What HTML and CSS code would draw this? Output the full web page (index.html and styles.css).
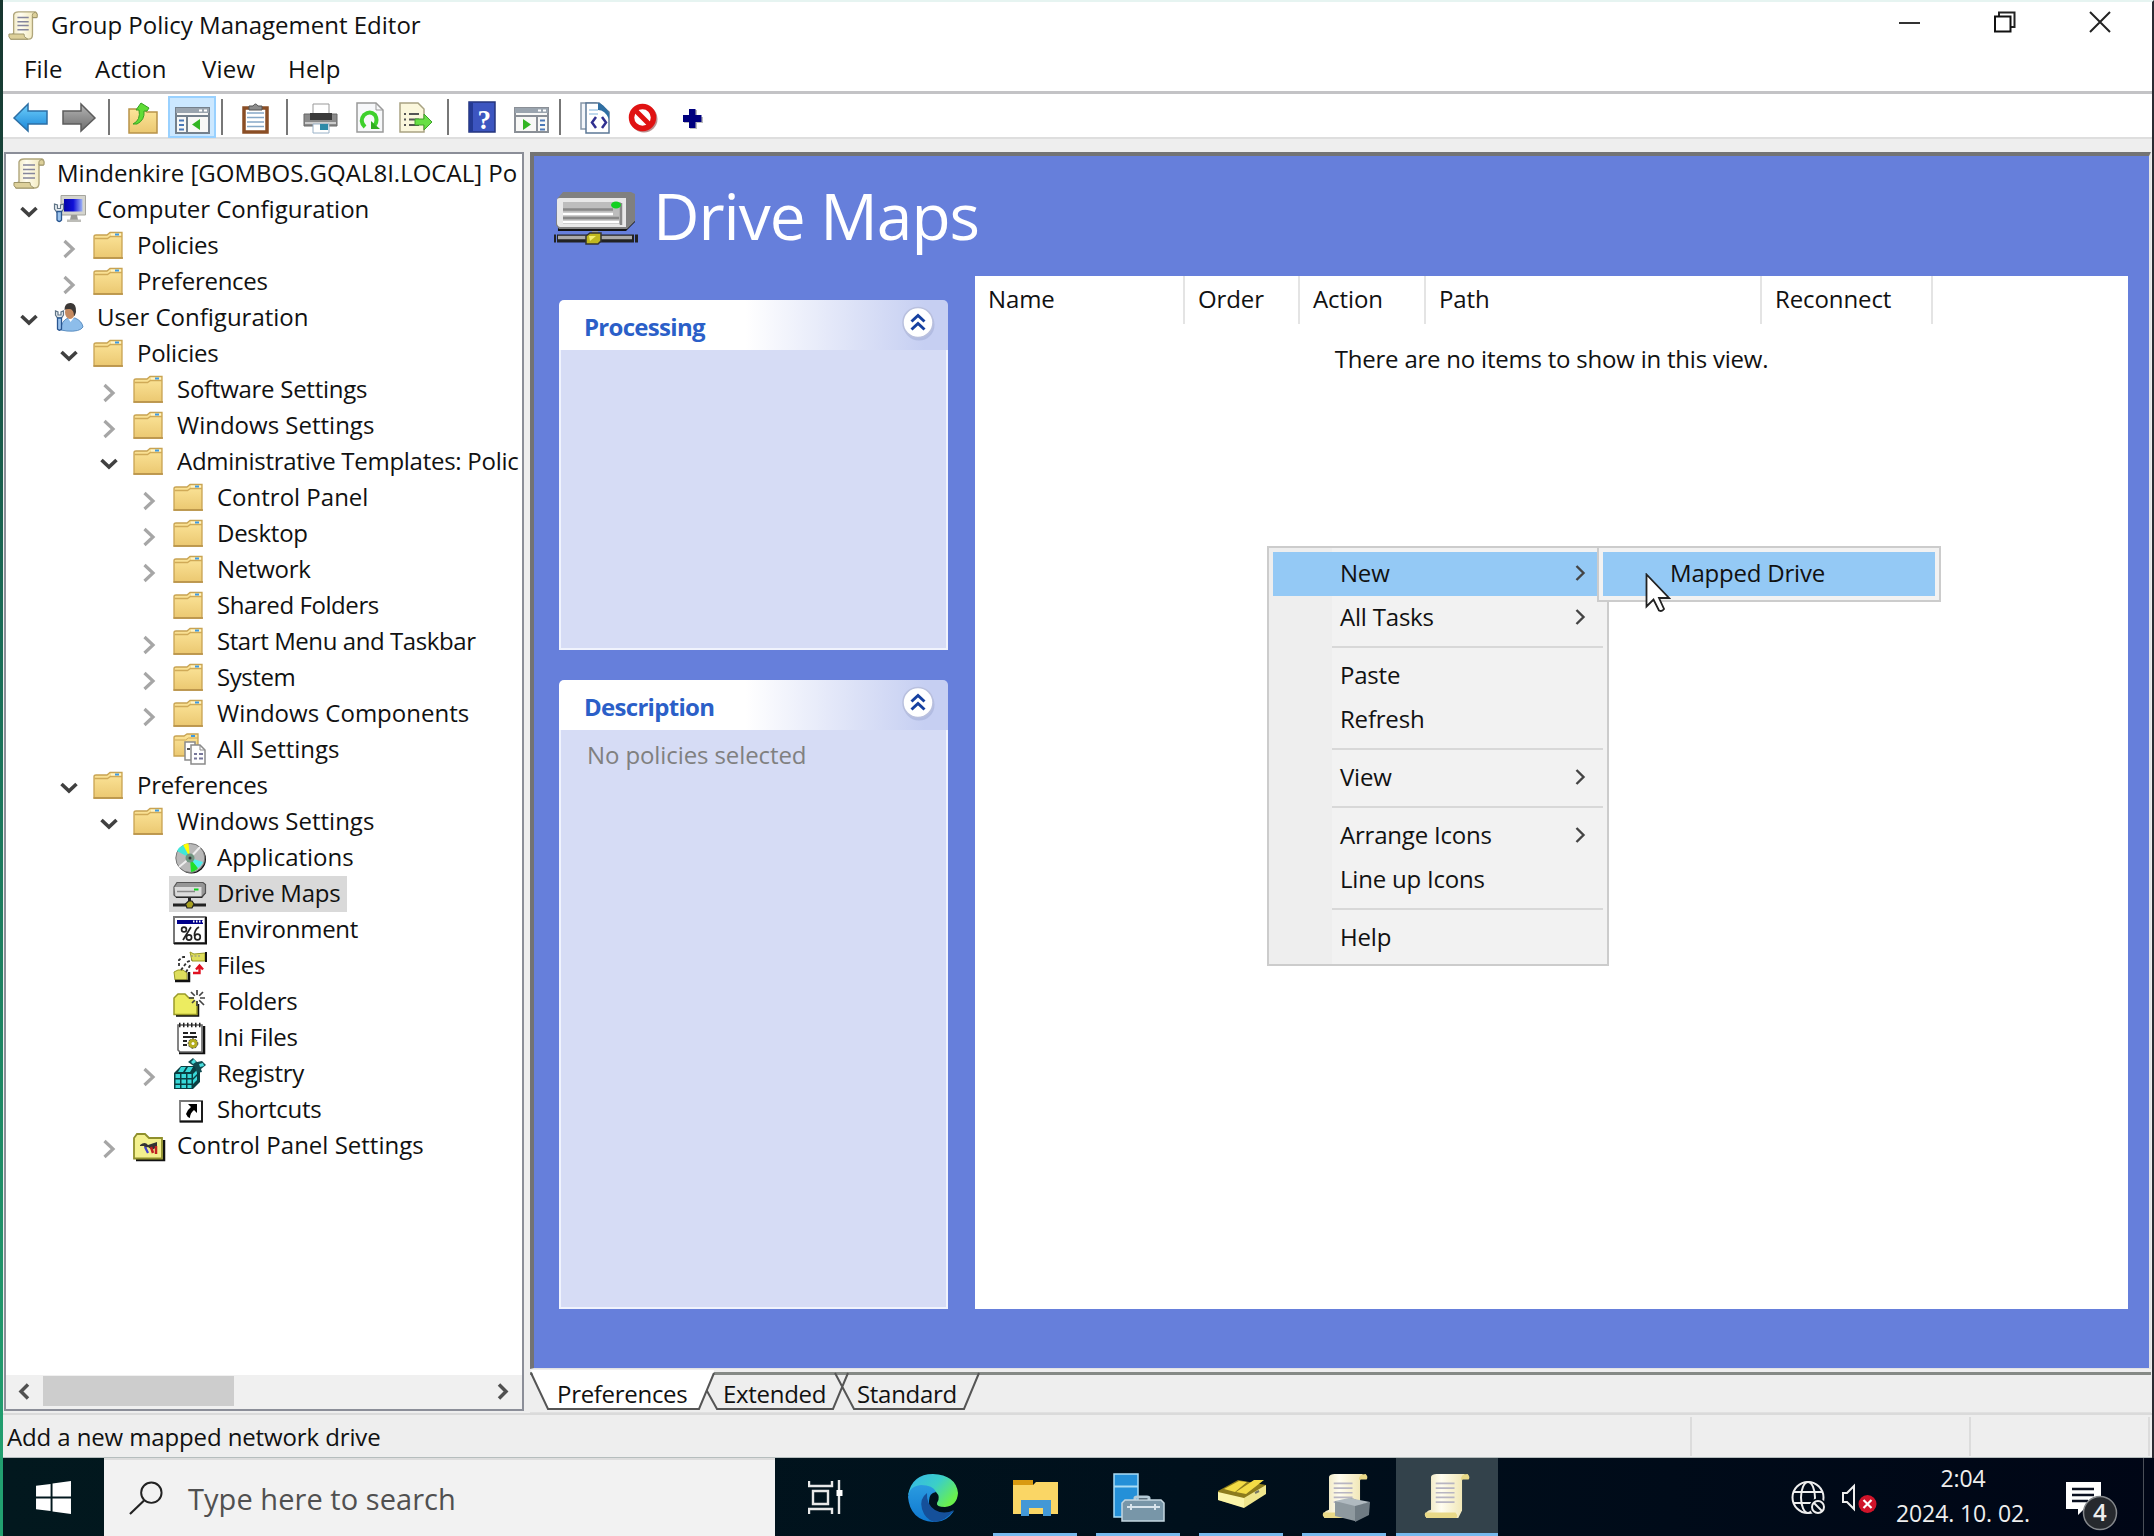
FILE: index.html
```html
<!DOCTYPE html>
<html lang="en">
<head>
<meta charset="utf-8">
<title>Group Policy Management Editor</title>
<link rel="stylesheet" href="styles.css">
</head>
<body>
<svg class="defs" aria-hidden="true">
  <defs>
    <linearGradient id="gFolder" x1="0" y1="0" x2="0" y2="1"><stop offset="0" stop-color="#fce59a"/><stop offset="1" stop-color="#ebc871"/></linearGradient>
    <linearGradient id="gBack" x1="0" y1="0" x2="0" y2="1"><stop offset="0" stop-color="#6fd0fb"/><stop offset="1" stop-color="#1a86d8"/></linearGradient>
    <linearGradient id="gFwd" x1="0" y1="0" x2="0" y2="1"><stop offset="0" stop-color="#b5b5b5"/><stop offset="1" stop-color="#6d6d6d"/></linearGradient>
    <linearGradient id="gScroll" x1="0" y1="0" x2="1" y2="0"><stop offset="0" stop-color="#ece2b4"/><stop offset=".4" stop-color="#fffdf0"/><stop offset="1" stop-color="#efe4b0"/></linearGradient>
    <linearGradient id="gScreen" x1="0" y1="0" x2="1" y2="0"><stop offset="0" stop-color="#0505a8"/><stop offset=".5" stop-color="#1010d8"/><stop offset="1" stop-color="#9fb4f5"/></linearGradient>
    <linearGradient id="gEdge1" x1="0" y1="0" x2="1" y2=".6"><stop offset="0" stop-color="#35b4ea"/><stop offset=".55" stop-color="#3bcfc8"/><stop offset="1" stop-color="#6af04c"/></linearGradient>
    <linearGradient id="gEdge2" x1="0" y1="0" x2="0" y2="1"><stop offset="0" stop-color="#2a9be0"/><stop offset="1" stop-color="#0f78d0"/></linearGradient>
    <symbol id="open" viewBox="0 0 40 36"><path d="M12.500 16l7.500 7 7.500-7" fill="none" stroke="#404040" stroke-width="3.600"/></symbol>
    <symbol id="closed" viewBox="0 0 40 36"><path d="M15.500 13l8.500 8-8.500 8" fill="none" stroke="#a6a6a6" stroke-width="3.200"/></symbol>
    <symbol id="scroll" viewBox="0 0 34 36">
      <path d="M6 6q1-3 5-3h18q3 1 1 6h-4v18q0 5-4 5H3q-3-4 3-6z" fill="url(#gScroll)" stroke="#b0a67c" stroke-width="1.400"/>
      <path d="M26 9q-1-5 3-5.500 3 1 2 5.500zM1 26.500h16q-1 3 4 5.500H3q-3-2-2-5.500z" fill="#ddd09a" stroke="#9d9469" stroke-width="1"/>
      <path d="M10 9h12M10 13.500h12M10 17.500h12M10 22h12" stroke="#85859c" stroke-width="1.700"/>
    </symbol>
    <symbol id="folder" viewBox="0 0 34 36">
      <path d="M1 8.500q0-1.500 2-1.500h11l3-2.500h12v25.500H1z" fill="url(#gFolder)" stroke="#c8a352" stroke-width="1.300"/>
      <path d="M1.500 10.500h13l3-2 h11.500" fill="none" stroke="#d0aa57" stroke-width="1.400"/>
      <path d="M18 6.500h10" stroke="#fff4c8" stroke-width="2"/><path d="M22 6.500h4" stroke="#3f9ae0" stroke-width="2"/>
      <path d="M.5 30h29.500" stroke="#b8934a" stroke-width="1.600"/>
    </symbol>
    <symbol id="computer" viewBox="0 0 34 36">
      <path d="M8 3.500h24.500v19.500H8z" fill="#d4d4ce" stroke="#a5a59e"/><path d="M11 7h18.500v12.500H11z" fill="url(#gScreen)"/>
      <path d="M18 23h6l1 5h-8z" fill="#9a9a96"/><path d="M14 27.500h14v2.500H14z" fill="#bdbdb8"/>
      <path d="M1.500 12v5l2.500 3.500h4l2.500-3.500v-5l-3 1v3.500H4.500V13z" fill="#e6ecf0" stroke="#5f7486" stroke-width="1.200"/><path d="M4 19.500h4.500v8.500q-2.300 3-4.500 0z" fill="#9cc4ee" stroke="#28558f" stroke-width="1.300"/>
    </symbol>
    <symbol id="user" viewBox="0 0 34 36">
      <path d="M8 30q0-9 7-12h7q7 3 8 9-3 5-16 4z" fill="#8dbdea" stroke="#5c8fc2"/>
      <path d="M14.500 17l3 5 4-5z" fill="#fff"/><ellipse cx="17" cy="12" rx="5" ry="7" fill="#c58a60"/><path d="M11.500 10q0-7.500 6.500-7 5.500.5 5 9-1 4-2 4 0-6-4-7-4-.5-5.500 1z" fill="#3c3836"/>
      <path d="M2.500 11v4l2 3h4l2-3v-4L8 12v3H5v-3z" fill="#e6ecf0" stroke="#5f7486" stroke-width="1.200"/><path d="M4.500 18h4v11q-2 2.500-4 0z" fill="#9cc4ee" stroke="#28558f" stroke-width="1.300"/>
    </symbol>
    <symbol id="allset" viewBox="0 0 34 36">
      <path d="M1 5.500q0-1.500 2-1.500h8l3-2h11v22H1z" fill="url(#gFolder)" stroke="#c8a352" stroke-width="1.300"/><path d="M1.500 8h11l3-2h9.500" fill="none" stroke="#d0aa57"/><path d="M18 4h4" stroke="#3f9ae0" stroke-width="2"/>
      <path d="M12 10h10v18H12z" fill="#fff" stroke="#8b8b8b" stroke-width="1.500"/><path d="M14 17h3" stroke="#555" stroke-width="2"/><path d="M18 13h9l5 5v14H18z" fill="#fff" stroke="#8b8b8b" stroke-width="1.500"/><path d="M27 13v5h5" fill="none" stroke="#8b8b8b"/>
      <path d="M21 22h3m2 0h4M21 26.500h3m2 0h4" stroke="#77779a" stroke-width="1.800"/>
    </symbol>
    <symbol id="disc" viewBox="0 0 34 36">
      <circle cx="18.500" cy="19" r="14.500" fill="#111"/><circle cx="17.300" cy="18" r="14.500" fill="#b9b9b9" stroke="#777"/>
      <path d="M17 18L10 5q3-2 5.500-1.500z" fill="#ff0"/><path d="M17 18L4 11q2-4 6-6z" fill="#3fe8d8"/><path d="M17 18l1 14q5-1 7-4z" fill="#1fe02a"/><path d="M17 18l8 10q3-2 5-6z" fill="#4ff0ee"/>
      <path d="M17 18L27 7M17 18L6 27" stroke="#eee" stroke-width="2"/><circle cx="17" cy="18" r="4.500" fill="#6f9580"/><circle cx="17" cy="18" r="1.500" fill="#333"/>
    </symbol>
    <symbol id="drive" viewBox="0 0 34 36">
      <path d="M3 22h26l4-5V8l-3 12H3z" fill="#000"/><path d="M1 11l3-4.500h26l2.500 2v8.500l-4 4H3l-2-2z" fill="#969696" stroke="#555" stroke-width="1.200"/><path d="M1.500 11h27v9H2.500z" fill="#dcdcdc"/><path d="M4 15.500h18" stroke="#888" stroke-width="1.500"/><path d="M21 13.500h4.500" stroke="#10d020" stroke-width="2"/>
      <path d="M16.500 22v6" stroke="#222" stroke-width="3"/><path d="M0 29h33" stroke="#222" stroke-width="3"/><path d="M12.500 28l3-3h3.500l2 3-2 4h-5z" fill="#a8a020" stroke="#222" stroke-width="1.200"/>
    </symbol>
    <symbol id="env" viewBox="0 0 34 36">
      <path d="M1 5h31.500v26H1z" fill="#fff" stroke="#777" stroke-width="2"/><path d="M33 5v26.500H1" fill="none" stroke="#111" stroke-width="2"/><path d="M4 8h26v4H4z" fill="#00008b"/><path d="M20 9.500h10" stroke="#fff" stroke-width="2" stroke-dasharray="1.500 1.500"/>
      <g fill="none" stroke="#222" stroke-width="1.700"><circle cx="11" cy="17.500" r="2.400"/><circle cx="16" cy="25.500" r="2.600"/><path d="M18 15l-8 13M26 15q-5 3-4.500 9"/><circle cx="24.500" cy="25" r="2.800"/></g>
    </symbol>
    <symbol id="files" viewBox="0 0 34 36">
      <path d="M17 4l4 2 11-1v8H19z" fill="#dede5c" stroke="#999926"/><path d="M18 8h10" stroke="#888" stroke-dasharray="2 1.500"/><path d="M33 4v10" stroke="#111" stroke-width="2"/>
      <path d="M1 24l4-2h5l4 3v7H2z" fill="#dede5c" stroke="#999926"/><path d="M2 33h14V24" fill="none" stroke="#111" stroke-width="2.500"/>
      <path d="M6 18V12l4-3h3M8 22l6-8 5-2M13 24l5-8" fill="none" stroke="#333" stroke-width="1.800" stroke-dasharray="3 2"/>
      <path d="M20 25h6.500v-7m-3.500 3.500l3.500-4 3.500 4" fill="none" stroke="#e01020" stroke-width="2.400"/>
    </symbol>
    <symbol id="newfolder" viewBox="0 0 34 36">
      <path d="M3 31.500h22V20" fill="none" stroke="#111" stroke-width="2.500"/><path d="M1 14l4-4h7l4 4h8v16.500H1z" fill="#ecec60" stroke="#9a9a28" stroke-width="1.500"/>
      <path d="M24 6v6m0 5v5M16 14h5m6 0h5M18 8l4 4m4 4l5 5M30 8l-4 4m-4 4l-3 3" stroke="#444" stroke-width="1.700"/><circle cx="24" cy="14" r="3" fill="#fff"/>
    </symbol>
    <symbol id="ini" viewBox="0 0 34 36">
      <path d="M6 33h25V6" fill="none" stroke="#111" stroke-width="2.500"/><path d="M5 5h24v27H7l-2-2z" fill="#fff" stroke="#666" stroke-width="1.600"/><path d="M6 5h24" stroke="#222" stroke-width="4.500" stroke-dasharray="1.500 2.500"/>
      <path d="M10 13h5m2 0h6M10 17h14M10 21h4M10 25h4" stroke="#222" stroke-width="2"/><circle cx="20" cy="23.500" r="4.800" fill="#b5ad20" stroke="#444" stroke-dasharray="2 1.500"/><circle cx="20" cy="23.500" r="1.500" fill="#fff"/>
    </symbol>
    <symbol id="registry" viewBox="0 0 34 36">
      <path d="M1 17l7-7h14l5 3v13l-7 7H1z" fill="#0a3f42"/><path d="M2.500 18h4.500v4H2.500zm6 0h4.500v4H8.500zm6 0h4v4h-4zM2.500 23.500h4.500v4H2.500zm6 0h4.500v4H8.500zm6 0h4v4h-4zM2.500 29h4.500v3H2.500zm6 0h4.500v3H8.500zm6 0h4v3h-4zM8 11h5l-3 5H5zm7 0h5l-3 5h-5zM20 18l4-4v4l-4 4zm0 6l4-4v4l-4 4z" fill="#38d8d8"/>
      <path d="M15 6l5-4 4 4 5-1 4 4-5 4 1 3-5 1-2-6z" fill="#104b50"/><path d="M18 6l3-3 2 3-3 2zM26 8l4-1 1 3-4 1z" fill="#4be0e0"/>
    </symbol>
    <symbol id="shortcut" viewBox="0 0 34 36"><path d="M7 9h22v20.500H7z" fill="#fff" stroke="#777" stroke-width="1.800"/><path d="M29 9v20.500H7" fill="none" stroke="#111" stroke-width="1.800"/><path d="M15 12h9v9l-3-3q-4 3-4 8-3-1-4-4 1-4 5-7z" fill="#000"/></symbol>
    <symbol id="cpanel" viewBox="0 0 34 36"><path d="M3 32h28V12" fill="none" stroke="#111" stroke-width="2.500"/><path d="M1 10l3-4h8l4 4h13v20.500H1z" fill="#f3f08e" stroke="#8f8f2c" stroke-width="1.800"/><path d="M7 17q5-4 8 0l9-3v5l-5 3-4-3-3 1-1-2H7z" fill="#333"/><path d="M12 19l3 6" stroke="#4040d0" stroke-width="2.200"/><path d="M18 19l2 6m3-7v8" stroke="#c02020" stroke-width="2.500"/></symbol>
    <symbol id="bigscroll" viewBox="0 0 48 50"><path d="M7 4q1-3 6-3h30l-3 7v32l-4 8H2q-3-7 5-9z" fill="url(#gScroll)"/><path d="M39 8q-1-7 7-7 3 3 1 6h-7zM1 42h32q3 3 1 6H3q-4-2-2-6z" fill="#e9d988"/><path d="M12 11h20M12 16h20M12 21h20M12 26h20M12 31h20" stroke="#b8b5c2" stroke-width="1.800"/></symbol>
    <symbol id="chev" viewBox="0 0 14 20"><path d="M3.500 3l7 7-7 7" fill="none" stroke="#444" stroke-width="2.400"/></symbol>
    <symbol id="collapse" viewBox="0 0 36 38"><circle cx="19" cy="21" r="15.500" fill="#9aa4cf" opacity=".45"/><circle cx="18" cy="18.500" r="15" fill="#fff" stroke="#b9c0de" stroke-width="1.500"/><path d="M11.500 17.500l6.500-6 6.500 6M11.500 25.500l6.500-6 6.500 6" fill="none" stroke="#1640a0" stroke-width="3"/></symbol>
  </defs>
</svg>

<div class="screen">
  <div class="window">
    <header class="titlebar">
      <svg class="app-icon"><use href="#scroll"/></svg>
      <h1 class="title">Group Policy Management Editor</h1>
      <div class="controls">
        <svg viewBox="0 0 22 22"><path d="M0 12h21" stroke="#333" stroke-width="2"/></svg>
        <svg viewBox="0 0 22 22"><path d="M5 5V1.500h15.500v14.500H17" fill="none" stroke="#222" stroke-width="2"/><path d="M1 5.500h15.500V20.500H1z" fill="none" stroke="#111" stroke-width="2"/></svg>
        <svg viewBox="0 0 22 22"><path d="M1 1l20 20M21 1L1 21" stroke="#222" stroke-width="2"/></svg>
      </div>
    </header>
    <nav class="menubar"><span class="m-file">File</span><span class="m-action">Action</span><span class="m-view">View</span><span>Help</span></nav>
    <div class="toolbar">
      <svg class="tb" viewBox="0 0 49 42"><path d="M9 22L23 8v7h19v13H23v7z" fill="url(#gBack)" stroke="#2c6fa5" stroke-width="1.500"/></svg>
      <svg class="tb" viewBox="0 0 49 42"><path d="M41 22L27 8v7H9v13h18v7z" fill="url(#gFwd)" stroke="#5c5c5c" stroke-width="1.500"/></svg>
      <i class="sep sep-a"></i>
      <svg class="tb" viewBox="0 0 49 42"><path d="M10 13h14l4 3h10v21H10z" fill="url(#gFolder)" stroke="#b8934a" stroke-width="1.500"/><path d="M14 28q8-4 6-14h-3l5-7 8 5-2 3h-3q1 9-7 13z" fill="#5fdc35" stroke="#36a022"/></svg>
      <span class="tb pressed"><svg viewBox="0 0 48 42"><path d="M8 12h33v25H8z" fill="#f8f8f6" stroke="#74808c" stroke-width="2"/><path d="M8 12h33v5H8z" fill="#9aa4ae"/><path d="M31 14.500h3m2 0h3" stroke="#fff" stroke-width="2"/><path d="M8 20h33M19 20v17" stroke="#74808c" stroke-width="2"/><path d="M11 24.500h5M11 29h5M11 33.500h5" stroke="#4a78b8" stroke-width="1.800"/><path d="M32 23v11l-8-5.500z" fill="#32b522"/></svg></span>
      <i class="sep sep-b"></i>
      <svg class="tb" viewBox="0 0 49 42"><path d="M13 12h23v24H13z" fill="#fff" stroke="#8a4e25" stroke-width="3.500"/><path d="M16 17h17M16 21.500h17M16 26h17M16 30.500h17" stroke="#86a8c8" stroke-width="1.500"/><path d="M18 14V10h4q2.500-4 5 0h4v4z" fill="#8c8c8c" stroke="#555"/></svg>
      <i class="sep sep-c"></i>
      <svg class="tb" viewBox="0 0 49 42"><path d="M16 8h16v12H16z" fill="#fff" stroke="#999"/><path d="M7 18h33v12H7z" fill="#8a8a8a" stroke="#666"/><path d="M13 17h22v7H13z" fill="#3a3a3a"/><path d="M8 27h31" stroke="#ccc" stroke-width="2"/><path d="M16 28h16v9H16z" fill="#fff" stroke="#9ab2c8"/><path d="M23 28h8v6h-8z" fill="#2e8aa8"/></svg>
      <svg class="tb" viewBox="0 0 49 42"><path d="M11 7h19l7 7v22H11z" fill="#f7f8fa" stroke="#999" stroke-width="1.500"/><path d="M30 7v7h7" fill="none" stroke="#999"/><path d="M19 31q-6-6-1-12 6-5 11 0 3 5 0 10" fill="none" stroke="#3ed02c" stroke-width="4"/><path d="M25 25v8h9z" fill="#2fae20"/></svg>
      <svg class="tb" viewBox="0 0 49 42"><path d="M5 7h18l6 6v23H5z" fill="#fbf7dc" stroke="#a9a383" stroke-width="1.500"/><path d="M9 18h2m3 0h10M9 23.500h2m3 0h10M9 29h2m3 0h10" stroke="#555" stroke-width="1.800"/><path d="M20 23h9v-5l8 8-8 8v-5h-9z" fill="#68df45" stroke="#3ea22b"/></svg>
      <i class="sep sep-d"></i>
      <svg class="tb" viewBox="0 0 49 42"><path d="M11 6h26v30H11z" fill="#3c55c0" stroke="#24357c" stroke-width="1.500"/><path d="M11 6h4v30h-4z" fill="#243a94"/><text x="26" y="33" text-anchor="middle" class="help-mark">?</text></svg>
      <svg class="tb" viewBox="0 0 49 42"><path d="M8 12h33v24H8z" fill="#f8f8f6" stroke="#8a8f96" stroke-width="2"/><path d="M8 12h33v5H8z" fill="#9aa4ae"/><path d="M31 14.500h3m2 0h3" stroke="#fff" stroke-width="2"/><path d="M8 20h33M30 20v17" stroke="#8a8f96" stroke-width="2"/><path d="M33 24.500h5M33 29h5M33 33.500h5" stroke="#4a78b8" stroke-width="1.800"/><path d="M16 23v11l8-5.500z" fill="#32b522"/></svg>
      <i class="sep sep-e"></i>
      <svg class="tb" viewBox="0 0 49 42"><path d="M9 7h15v26H9z" fill="#f3f6fa" stroke="#8796a8" stroke-width="1.500"/><path d="M14 7h13l10 9v21H14z" fill="#fff" stroke="#5c7896" stroke-width="1.500"/><path d="M17 14h9M17 18h9" stroke="#a9cbe6" stroke-width="1.500"/><path d="M26 7q5 0 11 10v6q-4-9-11-9z" fill="#2f6fa3"/><path d="M24 21l-4 5.500 4 5.500m6-11l4 5.500-4 5.500" fill="none" stroke="#303090" stroke-width="2.500"/></svg>
      <svg class="tb" viewBox="0 0 49 42"><circle cx="23" cy="23" r="13.500" fill="#7a2020" opacity=".5"/><circle cx="21.500" cy="21.500" r="11" fill="#fff" stroke="#e01212" stroke-width="5.500"/><path d="M14 14l15 15" stroke="#e01212" stroke-width="5"/></svg>
      <svg class="tb" viewBox="0 0 49 42"><path d="M20 14h7v7h6v6h-6v6h-7v-6h-6v-6h6z" fill="#777" opacity=".5"/><path d="M19 13h6.500v6h6v7h-6v6H19v-6h-6v-7h6z" fill="#00007e"/></svg>
    </div>

    <main class="content">
      <aside class="tree-pane">
        <div class="tree">
          <div class="row wide root"><span class="item"><svg><use href="#scroll"/></svg>Mindenkire [GOMBOS.GQAL8I.LOCAL] Po</span></div>
          <div class="row wide"><svg class="arrow"><use href="#open"/></svg><span class="item"><svg><use href="#computer"/></svg>Computer Configuration</span></div>
          <div class="row l2"><svg class="arrow"><use href="#closed"/></svg><span class="item"><svg><use href="#folder"/></svg>Policies</span></div>
          <div class="row l2"><svg class="arrow"><use href="#closed"/></svg><span class="item"><svg><use href="#folder"/></svg>Preferences</span></div>
          <div class="row wide"><svg class="arrow"><use href="#open"/></svg><span class="item"><svg><use href="#user"/></svg>User Configuration</span></div>
          <div class="row l2"><svg class="arrow"><use href="#open"/></svg><span class="item"><svg><use href="#folder"/></svg>Policies</span></div>
          <div class="row l3"><svg class="arrow"><use href="#closed"/></svg><span class="item"><svg><use href="#folder"/></svg>Software Settings</span></div>
          <div class="row l3 wide"><svg class="arrow"><use href="#closed"/></svg><span class="item"><svg><use href="#folder"/></svg>Windows Settings</span></div>
          <div class="row l3"><svg class="arrow"><use href="#open"/></svg><span class="item"><svg><use href="#folder"/></svg>Administrative Templates: Polic</span></div>
          <div class="row l4 wide"><svg class="arrow"><use href="#closed"/></svg><span class="item"><svg><use href="#folder"/></svg>Control Panel</span></div>
          <div class="row l4"><svg class="arrow"><use href="#closed"/></svg><span class="item"><svg><use href="#folder"/></svg>Desktop</span></div>
          <div class="row l4"><svg class="arrow"><use href="#closed"/></svg><span class="item"><svg><use href="#folder"/></svg>Network</span></div>
          <div class="row l4 narrow"><svg class="arrow"></svg><span class="item"><svg><use href="#folder"/></svg>Shared Folders</span></div>
          <div class="row l4 narrow"><svg class="arrow"><use href="#closed"/></svg><span class="item"><svg><use href="#folder"/></svg>Start Menu and Taskbar</span></div>
          <div class="row l4 narrow"><svg class="arrow"><use href="#closed"/></svg><span class="item"><svg><use href="#folder"/></svg>System</span></div>
          <div class="row l4 wide"><svg class="arrow"><use href="#closed"/></svg><span class="item"><svg><use href="#folder"/></svg>Windows Components</span></div>
          <div class="row l4 wide"><svg class="arrow"></svg><span class="item"><svg><use href="#allset"/></svg>All Settings</span></div>
          <div class="row l2"><svg class="arrow"><use href="#open"/></svg><span class="item"><svg><use href="#folder"/></svg>Preferences</span></div>
          <div class="row l3 wide"><svg class="arrow"><use href="#open"/></svg><span class="item"><svg><use href="#folder"/></svg>Windows Settings</span></div>
          <div class="row l4 wide"><svg class="arrow"></svg><span class="item"><svg><use href="#disc"/></svg>Applications</span></div>
          <div class="row l4"><svg class="arrow"></svg><span class="item selected"><svg><use href="#drive"/></svg>Drive Maps</span></div>
          <div class="row l4"><svg class="arrow"></svg><span class="item"><svg><use href="#env"/></svg>Environment</span></div>
          <div class="row l4"><svg class="arrow"></svg><span class="item"><svg><use href="#files"/></svg>Files</span></div>
          <div class="row l4"><svg class="arrow"></svg><span class="item"><svg><use href="#newfolder"/></svg>Folders</span></div>
          <div class="row l4"><svg class="arrow"></svg><span class="item"><svg><use href="#ini"/></svg>Ini Files</span></div>
          <div class="row l4"><svg class="arrow"><use href="#closed"/></svg><span class="item"><svg><use href="#registry"/></svg>Registry</span></div>
          <div class="row l4"><svg class="arrow"></svg><span class="item"><svg><use href="#shortcut"/></svg>Shortcuts</span></div>
          <div class="row l3 wide"><svg class="arrow"><use href="#closed"/></svg><span class="item"><svg><use href="#cpanel"/></svg>Control Panel Settings</span></div>
        </div>
        <div class="hscroll">
          <svg class="sb-arrow" viewBox="0 0 37 32"><path d="M22 8.500l-7 7 7 7" fill="none" stroke="#505050" stroke-width="3.500"/></svg>
          <div class="thumb"></div>
          <svg class="sb-arrow sb-right" viewBox="0 0 37 32"><path d="M14 8.500l7 7-7 7" fill="none" stroke="#505050" stroke-width="3.500"/></svg>
        </div>
      </aside>

      <section class="detail">
        <div class="stage">
          <div class="heading">
            <svg class="drive-big" viewBox="0 0 84 54">
              <path d="M4 37v3h68l9-9V3" fill="#111"/><path d="M3 8l6-7h68l4 2v27l-8 8H5l-3-4z" fill="#808080"/><path d="M3 9q0-2 3-2h66v29H6q-3-1-3-4z" fill="#e8e8e8"/><path d="M9 11h58v22H9z" fill="#bdbdbd"/><path d="M9 18.500h50M9 27h56M67 12v22" stroke="#888" stroke-width="2.500"/><path d="M9 23h50M9 31h56" stroke="#fff" stroke-width="2.500"/><ellipse cx="62" cy="14" rx="5" ry="3.500" fill="#12d020"/>
              <path d="M38 40h6v5h-6z" fill="#999"/><path d="M0 47.500h2m1 0h77m1 0h3" stroke="#222" stroke-width="8"/><path d="M4 46.500h74" stroke="#aaa" stroke-width="3.500"/><path d="M32 45l4-3h11v8l-3 3H32z" fill="#c0b820" stroke="#333" stroke-width="1.500"/><path d="M35 45h7l-6 5z" fill="#f4f070"/>
            </svg>
            <h2 class="heading-text">Drive Maps</h2>
          </div>
          <div class="stage-body">
            <div class="panels">
              <div class="panel processing"><div class="panel-head"><span>Processing</span><svg><use href="#collapse"/></svg></div><div class="panel-body"></div></div>
              <div class="panel description"><div class="panel-head"><span>Description</span><svg><use href="#collapse"/></svg></div><div class="panel-body">No policies selected</div></div>
            </div>
            <div class="list">
              <div class="list-head"><span>Name</span><span>Order</span><span>Action</span><span>Path</span><span>Reconnect</span></div>
              <p class="empty">There are no items to show in this view.</p>
            </div>
          </div>
        </div>
        <div class="tabs">
          <svg class="tab-shapes" viewBox="0 0 460 41"><path d="M1 0l17 39h151l15-36V0z" fill="#fff"/><path d="M1 3l17 36h151L184 3M177 21l10 18h116l15-36M305 3l19 36h110L449 3" fill="none" stroke="#555" stroke-width="2"/></svg>
          <span class="t-pref">Preferences</span><span class="t-ext">Extended</span><span>Standard</span>
        </div>
      </section>
    </main>
    <footer class="status"><span class="status-text">Add a new mapped network drive</span><span class="cell cell-a"></span><span class="cell cell-b"></span></footer>
  </div>

  <div class="taskbar">
    <div class="start"><svg viewBox="0 0 36 34"><path d="M0 5l15-2v13H0zM17 2.500L36 0v16H17zM0 18h15v13L0 29zM17 18h19v16l-19-2.500z" fill="#fff"/></svg></div>
    <div class="search"><svg viewBox="0 0 36 36"><circle cx="23" cy="12" r="10.500" fill="none" stroke="#222" stroke-width="2"/><path d="M15.500 20L1 34" stroke="#222" stroke-width="2.200"/></svg><span>Type here to search</span></div>
    <div class="taskview"><svg viewBox="0 0 36 34"><path d="M1 1v5h23V1M5 11h15v13H5zM1 34v-5h23v5M31 0v34" fill="none" stroke="#e8e8e8" stroke-width="2.400"/><path d="M28.500 10h6v6h-6z" fill="#fff"/></svg></div>
    <div class="task"><svg viewBox="0 0 52 50"><path d="M1 22Q5 1 26 1q23 1 25 19-1 13-13 14-9 0-8-4 4-6-1-11-11-9-28 3z" fill="url(#gEdge1)"/><path d="M1 24Q2 13 14 12q12 0 15 7-7 1-7 9-1 8 7 12 9 3 18-2-8 12-21 11Q3 47 1 24z" fill="url(#gEdge2)"/><path d="M20 20q-8 6-5 16 3 10 12 13 12-1 20-12-10 5-19 0-9-6-8-17z" fill="#15509a"/></svg></div>
    <div class="task running"><svg viewBox="0 0 52 50"><path d="M3 7h20v6H3z" fill="#d99a10"/><path d="M3 12h20l3-3h22v32H3z" fill="#fad665"/><path d="M11 43V27h30v16h-8v-8H19v8z" fill="#4398d6"/></svg></div>
    <div class="task running"><svg viewBox="0 0 52 50"><path d="M1 1h24v43H1z" fill="#2490d8" stroke="#a9dcf5" stroke-width="1.500"/><path d="M1 13.500h24" stroke="#a9dcf5" stroke-width="2"/><path d="M22 27v-2q0-1 2-1h10q2 0 2 1v2" fill="none" stroke="#b5cbd7" stroke-width="3"/><path d="M12 27h36l3 3v18H9V30z" fill="#7896a8" stroke="#c4d6e0" stroke-width="1.500"/><path d="M14 34h33M18 31v6m24-6v6" stroke="#d8e4ec" stroke-width="2"/></svg></div>
    <div class="task running"><svg viewBox="0 0 52 50"><path d="M2 18L22 7l28 5v8L27 34 2 27z" fill="#8d7c1c"/><path d="M8 16L23 8l8 1-12 10zM20 19L38 7l10 0-18 14z" fill="#f3dc45"/><path d="M2 19l26 6v10L2 27z" fill="#fbf4a8"/><path d="M28 25l22-13v9L28 35z" fill="#efe58c"/><path d="M39 20l4-2" stroke="#776" stroke-width="2"/></svg></div>
    <div class="task running"><svg viewBox="0 0 52 50"><use href="#bigscroll" x="2" y="0" width="48" height="47"/><path d="M28 30v-2q4-3 9 0v2" fill="none" stroke="#7b868e" stroke-width="2.500"/><path d="M16 28l20 3v17l-20-5z" fill="#8e999f"/><path d="M36 32l15-3-1 13-14 7z" fill="#6f7b83"/><path d="M16 28l14-3 21 4-15 4z" fill="#b0bac0"/></svg></div>
    <div class="task active"><svg viewBox="0 0 52 50"><use href="#bigscroll" x="3" y="0" width="46" height="47"/></svg></div>
    <div class="tray">
      <svg class="globe" viewBox="0 0 36 34"><g fill="none" stroke="#eee" stroke-width="2"><circle cx="17" cy="16.500" r="15.500"/><ellipse cx="17" cy="16.500" rx="7" ry="15.500"/><path d="M3 11h28M3 22h18"/></g><circle cx="27" cy="26" r="8.500" fill="#000a16"/><circle cx="27" cy="26" r="6" fill="none" stroke="#eee" stroke-width="2"/><path d="M23 22l8 8" stroke="#eee" stroke-width="2"/></svg>
      <svg class="speaker" viewBox="0 0 36 34"><path d="M1 10h4l7-7v23l-7-7H1z" fill="none" stroke="#eee" stroke-width="2"/><circle cx="25.500" cy="21" r="9" fill="#d0142a"/><path d="M21.500 17l8 8m0-8l-8 8" stroke="#fff" stroke-width="2.200"/></svg>
      <div class="clock"><span class="time">2:04</span><span class="date">2024. 10. 02.</span></div>
      <div class="notify"><svg viewBox="0 0 52 54"><path d="M0 2h35v27H18l-6 6v-6H0z" fill="#fff"/><path d="M6 9h22M6 15h22M6 21h16" stroke="#0a1020" stroke-width="2.500"/><circle cx="34" cy="33" r="16.500" fill="#26292e" stroke="#85888c" stroke-width="1.500"/></svg><span>4</span></div>
      <i class="peek"></i>
    </div>
  </div>

  <div class="menu context">
    <div class="mi hot">New<svg><use href="#chev"/></svg></div>
    <div class="mi">All Tasks<svg><use href="#chev"/></svg></div>
    <div class="ms"></div>
    <div class="mi">Paste</div>
    <div class="mi">Refresh</div>
    <div class="ms"></div>
    <div class="mi">View<svg><use href="#chev"/></svg></div>
    <div class="ms"></div>
    <div class="mi">Arrange Icons<svg><use href="#chev"/></svg></div>
    <div class="mi">Line up Icons</div>
    <div class="ms"></div>
    <div class="mi">Help</div>
  </div>
  <div class="menu submenu"><div class="mi hot">Mapped Drive</div></div>
  <svg class="cursor" viewBox="0 0 26 40"><path d="M1.500 1.500v32l7-7 5.500 11q3 1.500 5-1.500L14 25h10z" fill="#fff" stroke="#222" stroke-width="1.800"/></svg>
</div>
</body>
</html>
```
FILE: styles.css
```css
* { box-sizing: border-box; }
body { margin: 0; font-family: "Open Sans", "Noto Sans", sans-serif; font-size: 24px; letter-spacing: -0.3px; color: #111; }
h1, h2, p { margin: 0; font-weight: 400; }
svg { display: block; flex: none; }
.defs { position: absolute; width: 0; height: 0; }
.screen { position: relative; width: 2154px; height: 1536px; overflow: hidden; display: flex; flex-direction: column; background: linear-gradient(#17352e, #1a6b56 40%, #22a070 96%); }
.window { height: 1458px; margin-left: 3px; border-right: 2px solid #2b2b32; border-top: 2px solid #e6f4f1; background: #eee; display: flex; flex-direction: column; }

.titlebar { height: 46px; background: #fff; display: flex; align-items: center; padding-left: 5px; }
.app-icon { width: 32px; height: 34px; margin-top: 2px; }
.title { font-size: 24px; line-height: 46px; margin-left: 11px; letter-spacing: 0; }
.controls { margin-left: auto; display: flex; gap: 73px; padding-right: 41px; margin-top: -6px; }
.controls svg { width: 22px; height: 22px; }

.menubar { height: 43px; background: #fff; display: flex; align-items: center; padding-left: 21px; line-height: 41px; padding-bottom: 2px; letter-spacing: 0.2px; }
.m-file { width: 71px; }
.m-action { width: 107px; }
.m-view { width: 86px; }

.toolbar { height: 48px; background: #fff; border-top: 3px solid #c3c3c6; border-bottom: 2px solid #dedede; display: flex; align-items: center; padding: 2px 0 0 2px; }
.tb { width: 49px; height: 42px; }
.pressed { width: 48px; background: #cce8ff; border: 2px solid #99d1ff; }
.pressed svg { width: 48px; height: 42px; margin: -2px; }
.sep { width: 2px; height: 36px; background: #777; }
.sep-a { margin: 0 9px 0 5px; }
.sep-b { margin: 0 8px 0 5px; }
.sep-c { margin: 0 9px 0 6px; }
.sep-d { margin: 0 9px 0 3px; }
.sep-e { margin: 0 11px 0 3px; }
.help-mark { font: 700 27px "Liberation Serif", serif; fill: #fff; }

.content { flex: 1; display: flex; padding: 13px 1px 0 1px; min-height: 0; }
.tree-pane { width: 520px; height: 1259px; border: 2px solid #8b8e98; background: #fff; display: flex; flex-direction: column; overflow: hidden; }
.tree { flex: 1; padding-top: 2px; overflow: hidden; letter-spacing: -0.27px; }
.row { height: 36px; display: flex; padding-left: 3px; white-space: nowrap; line-height: 33px; }
.wide { letter-spacing: 0; }
.narrow { letter-spacing: -0.42px; }
.root .item { padding-right: 0; }
.l2 { padding-left: 43px; }
.l3 { padding-left: 83px; }
.l4 { padding-left: 123px; }
.arrow { width: 40px; height: 36px; }
.item { display: flex; padding: 0 7px 0 4px; }
.item svg { width: 34px; height: 36px; margin-right: 10px; }
.selected { background: #d9d9d9; }
.hscroll { height: 34px; background: #f0f0f0; display: flex; align-items: flex-start; padding-top: 1px; }
.sb-arrow { width: 37px; height: 32px; }
.sb-right { margin-left: auto; }
.thumb { width: 191px; height: 30px; background: #cdcdcd; }

.detail { flex: 1; margin-left: 6px; display: flex; flex-direction: column; }
.stage { height: 1220px; background: #667fdb; border: solid; border-width: 4px 2px 1px 4px; border-color: #737373 #e3e3e3 #e3e3e3 #737373; }
.heading { height: 120px; display: flex; padding: 35px 0 0 20px; }
.drive-big { width: 84px; height: 54px; }
.heading-text { font-size: 64px; line-height: 64px; color: #fff; margin: -7px 0 0 15px; letter-spacing: -1px; }
.stage-body { display: flex; padding-left: 25px; }
.panels { width: 389px; margin: 24px 27px 0 0; }
.panel-head { height: 50px; border-radius: 5px 5px 0 0; background: linear-gradient(90deg, #fff 48%, #c6cff2 94%); display: flex; justify-content: space-between; padding: 4px 12px 0 25px; font-weight: 700; color: #2b5fc8; line-height: 46px; letter-spacing: -0.7px; }
.panel-head svg { width: 36px; height: 38px; }
.panel-body { border: 2px solid #f0f3fd; border-top: 0; background: #d6dcf5; padding: 8px 0 0 26px; color: #808080; line-height: 34px; letter-spacing: -0.1px; }
.processing .panel-body { height: 300px; }
.description { margin-top: 30px; }
.description .panel-body { height: 579px; }
.list { width: 1153px; height: 1033px; background: #fff; }
.list-head { height: 48px; display: grid; grid-template-columns: 210px 115px 126px 336px 171px; line-height: 46px; letter-spacing: -0.1px; }
.list-head span { border-right: 2px solid #e4e4e4; padding-left: 13px; }
.empty { text-align: center; line-height: 34px; margin-top: 18px; letter-spacing: -0.22px; }

.tabs { position: relative; height: 41px; border-top: 3px solid #858985; border-bottom: 1px solid #e0e0e0; display: flex; padding-left: 27px; line-height: 38px; margin-top: 3px; }
.tab-shapes { position: absolute; left: 0; top: -5px; width: 460px; height: 41px; }
.tabs span { position: relative; }
.t-pref { width: 166px; }
.t-ext { width: 134px; }

.status { height: 45px; border-top: 2px solid #dadada; border-bottom: 1px solid #b5bdbd; display: flex; line-height: 43px; padding: 0 2px 0 4px; letter-spacing: -0.12px; }
.status-text { flex: 1; }
.cell { border-left: 2px solid #dcdcdc; margin: 2px 0 1px; }
.cell-a { width: 279px; }
.cell-b { width: 181px; border-right: 2px solid #dcdcdc; }

.taskbar { height: 78px; margin-left: 3px; background: linear-gradient(90deg, #02181e, #00101c 55%, #000616); display: flex; }
.start { width: 101px; padding: 23px 0 0 33px; }
.start svg { width: 35px; height: 33px; }
.search { width: 671px; background: #f2f2f2; border-top: 2px solid #ddd; display: flex; padding: 21px 0 0 25px; font-size: 29px; color: #505050; line-height: 36px; letter-spacing: 0.05px; }
.search svg { width: 35px; height: 35px; margin-right: 24px; }
.taskview { width: 106px; padding: 22px 0 0 33px; }
.taskview svg { width: 36px; height: 34px; }
.task { width: 103px; display: flex; justify-content: center; padding-top: 15px; position: relative; }
.task svg { width: 52px; height: 50px; }
.running::after, .active::after { content: ""; position: absolute; left: 9px; right: 10px; bottom: 0; height: 3px; background: #76b9ed; }
.active { background: #33424b; width: 102px; }
.active::after { left: 0; right: 0; }
.tray { margin-left: auto; display: flex; color: #eee; width: 363px; }
.globe { width: 36px; height: 34px; margin-top: 23px; }
.speaker { width: 36px; height: 34px; margin: 25px 0 0 15px; }
.clock { width: 160px; margin-left: 5px; display: flex; flex-direction: column; align-items: center; font-size: 23px; line-height: 35px; padding-top: 3px; letter-spacing: -0.1px; }
.notify { position: relative; width: 52px; margin: 22px 25px 0 23px; }
.notify svg { width: 52px; height: 54px; }
.notify span { position: absolute; left: 27px; top: 15px; font-weight: 600; font-size: 24px; line-height: 34px; }
.peek { width: 1px; background: #4a4f58; }

.menu { position: absolute; background: #f2f2f2; border: 2px solid #cccccc; padding: 4px; }
.context { left: 1267px; top: 546px; width: 342px; height: 420px; background: linear-gradient(90deg, #eee 63px, #f2f2f2 63px); }
.submenu { left: 1597px; top: 546px; width: 344px; height: 56px; }
.mi { height: 44px; line-height: 42px; padding: 0 16px 2px 67px; display: flex; justify-content: space-between; align-items: center; letter-spacing: -0.2px; }
.mi svg { width: 14px; height: 20px; margin-top: -1px; }
.hot { background: #94c9f5; }
.ms { height: 14px; padding-top: 6px; margin-left: 59px; }
.ms::before { content: ""; display: block; height: 2px; background: #d8d8d8; }
.cursor { position: absolute; left: 1645px; top: 573px; width: 26px; height: 40px; }
```
